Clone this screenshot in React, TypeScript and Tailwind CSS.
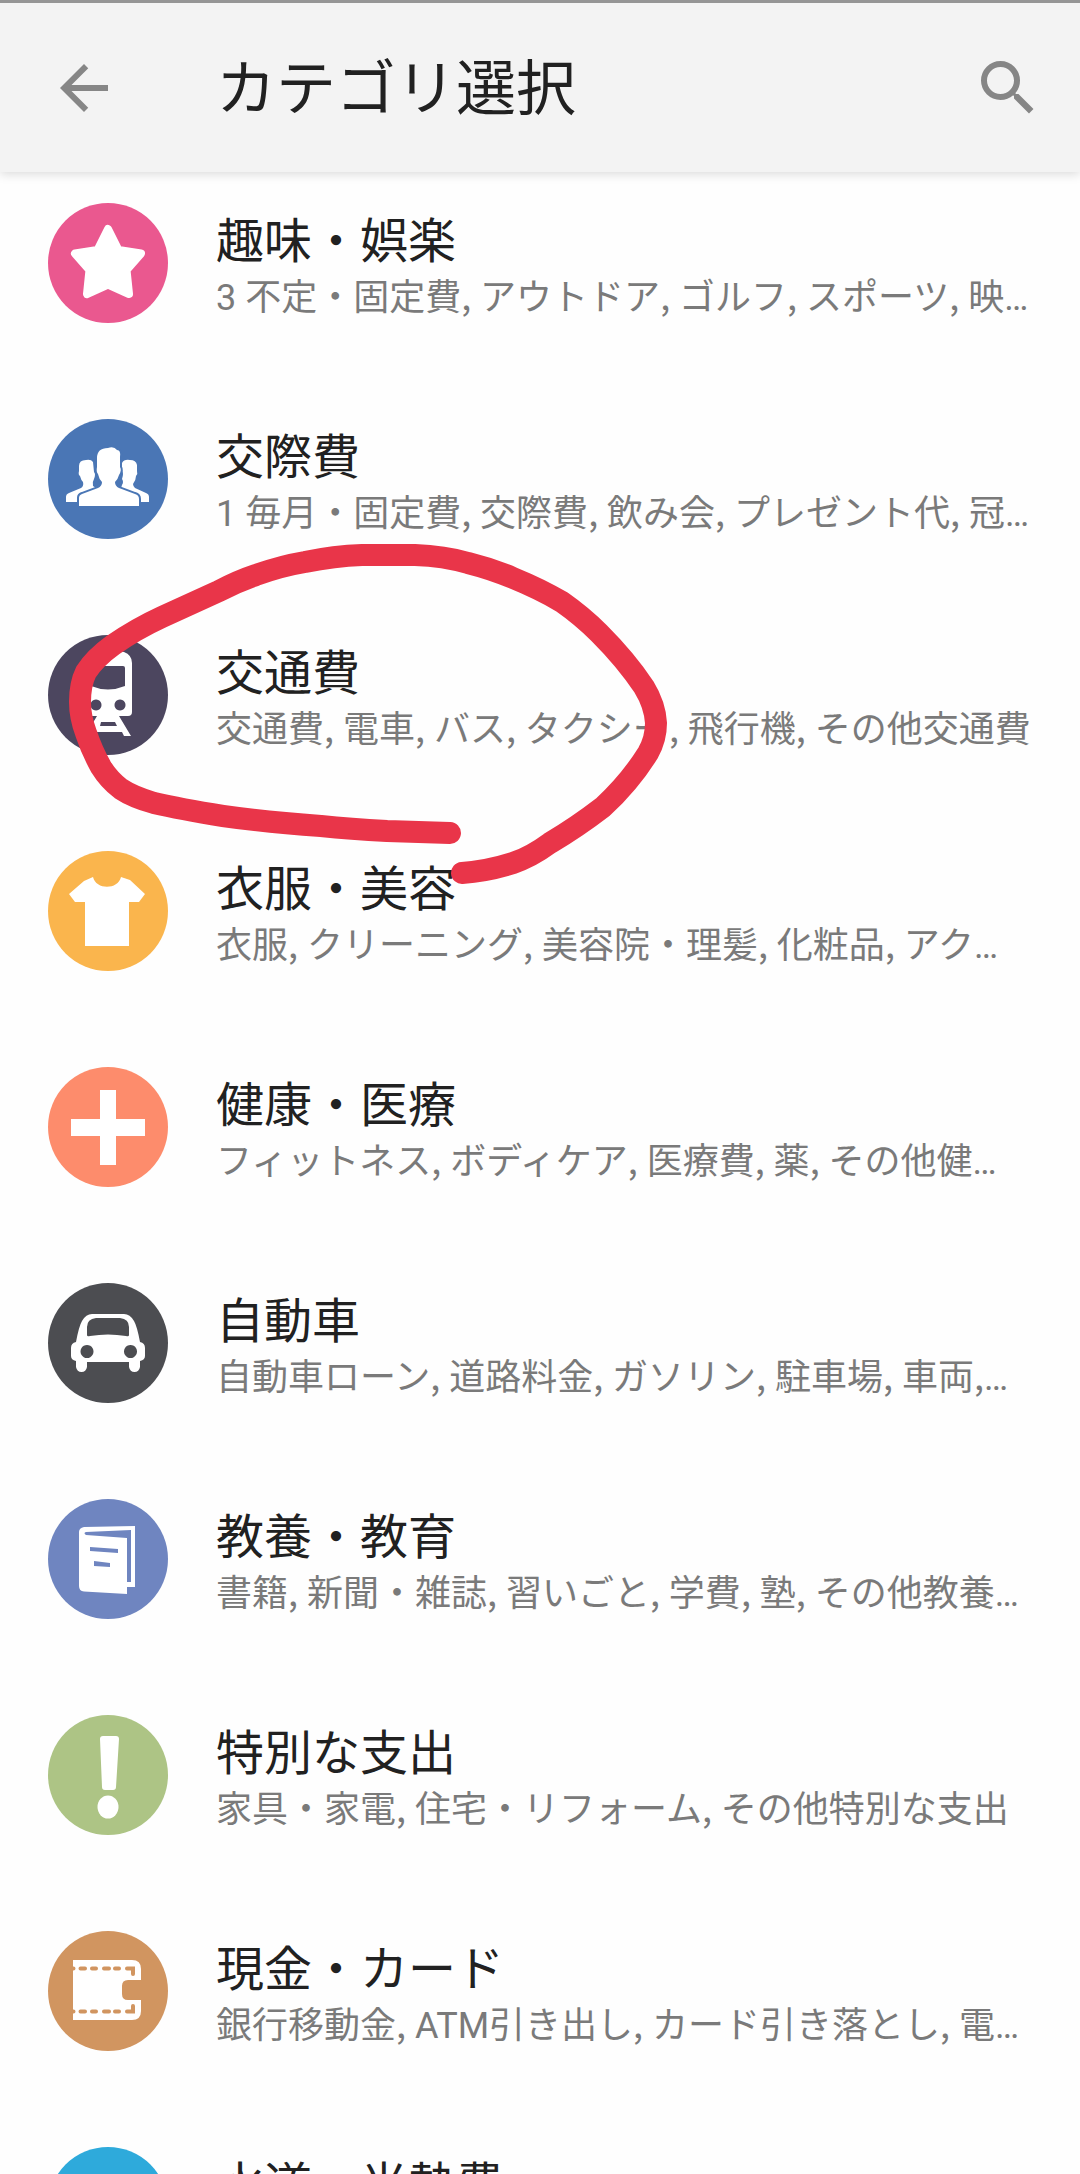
import type { ReactNode } from 'react';
import { MdArrowBack, MdSearch } from 'react-icons/md';

type Category = {
  name: string;
  detail?: string;
  color: string;
  icon?: ReactNode;
};

const categories: Category[] = [
  {
    name: '趣味・娯楽',
    detail: '3 不定・固定費, アウトドア, ゴルフ, スポーツ, 映…',
    color: 'bg-[#ea588f]',
    icon: (
      <path
        d="M60 26L70.500 47L93 50.500L78.500 67L81 91L60 81.500L39 91L41.500 67L27 50.500L49.500 47Z"
        stroke="white"
        strokeWidth={8}
        strokeLinejoin="round"
      />
    ),
  },
  {
    name: '交際費',
    detail: '1 毎月・固定費, 交際費, 飲み会, プレゼント代, 冠…',
    color: 'bg-[#4a76b5]',
    icon: (
      <>
        <path d="M18 83V78Q18 75 21 74L33 69Q36 67 35 63Q33 61 32 57Q30 56 31 52V47Q31 41 38 41Q43 40 45 43L46 53Q48 55 46 60Q44 63 45 67L48 69L32 75Q29 77 29 83Z" />
        <path d="M101 83V78Q101 75 98 74L87 69Q85 67 85 65Q88 61 88 57Q90 55 89 52V46Q88 41 82 41Q76 40 74 44V52Q76 54 74 60Q76 63 74 66L73 69L89 75Q92 77 92 83Z" />
        <path
          d="M31 87V79Q31 76 34 75L50 69Q54 67 54 63Q51 60 50 55Q48 53 49 48V39Q49 29 60 29Q66 27 69 31Q73 31 72 38V48Q74 51 71 56Q70 60 67 63Q67 67 71 69L87 75Q91 76 91 80V87Z"
          stroke="#4a76b5"
          strokeWidth={4}
          paintOrder="stroke"
        />
      </>
    ),
  },
  {
    name: '交通費',
    detail: '交通費, 電車, バス, タクシー, 飛行機, その他交通費',
    color: 'bg-[#4c465f]',
    icon: (
      <path
        fillRule="evenodd"
        d="M44 17Q60 13 76 17Q84 20 84 28V77Q84 81 80 81H71L83 101H76L74 97H46L44 101H37L49 81H40Q36 81 36 77V28Q36 20 44 17ZM45 31Q43 31 43 33V51Q60 58 77 51V33Q77 31 75 31ZM48 64.500a5.500 5.500 0 1 0 .01 0ZM72 64.500a5.500 5.500 0 1 0 .01 0ZM53 87L52 91H69L67 87Z"
      />
    ),
  },
  {
    name: '衣服・美容',
    detail: '衣服, クリーニング, 美容院・理髪, 化粧品, アク…',
    color: 'bg-[#fab54d]',
    icon: <path d="M45 26C48 39 70 39 73 26L82 29L97 43L91 51H81V95H37V51H27L21 43L36 30Z" />,
  },
  {
    name: '健康・医療',
    detail: 'フィットネス, ボディケア, 医療費, 薬, その他健…',
    color: 'bg-[#fd8c6c]',
    icon: <path d="M52 23H68V52H97V69H68V98H52V69H23V52H52Z" />,
  },
  {
    name: '自動車',
    detail: '自動車ローン, 道路料金, ガソリン, 駐車場, 車両,…',
    color: 'bg-[#4c4d51]',
    icon: (
      <path
        fillRule="evenodd"
        d="M44 31H76Q82 31 86 38Q89 43 92 59Q97 60 97 65V73Q97 77 92 78V84Q91 89 86.500 89Q82 89 81 84V79H39V84Q38 89 33.500 89Q29 89 28 84V78Q23 77 23 73V65Q23 60 28 59Q31 43 34 38Q38 31 44 31ZM48 35Q39 36 39 44V52Q39 54 42 53Q60 50 78 53Q81 54 81 52V44Q81 36 72 35ZM39 62a6.500 6.500 0 1 0 .01 0ZM82.500 62a6.500 6.500 0 1 0 .01 0Z"
      />
    ),
  },
  {
    name: '教養・教育',
    detail: '書籍, 新聞・雑誌, 習いごと, 学費, 塾, その他教養…',
    color: 'bg-[#6f85c0]',
    icon: (
      <path
        fillRule="evenodd"
        d="M36 28L87 27V88H79V95L36 92.500Q31 92 31 87V33Q31 29 36 28ZM38 33Q35 34 38 36L79 39V83H83V31ZM42 48V52L70 54V50ZM46 62V67L62 68V64Z"
      />
    ),
  },
  {
    name: '特別な支出',
    detail: '家具・家電, 住宅・リフォーム, その他特別な支出',
    color: 'bg-[#adc485]',
    icon: (
      <>
        <path d="M55 21H68Q71 21 71 24L68 72Q68 75 65 75H57Q54 75 54 72L52 24Q52 21 55 21Z" />
        <ellipse cx={60} cy={92} rx={10.5} ry={11.5} />
      </>
    ),
  },
  {
    name: '現金・カード',
    detail: '銀行移動金, ATM引き出し, カード引き落とし, 電…',
    color: 'bg-[#d19560]',
    icon: (
      <>
        <path d="M25 29H84Q93 29 93 38V49H80Q74 49 74 55V63Q74 69 80 69H93V80Q93 89 84 89H25Z" />
        <path
          d="M25 37.500H25.500M32.500 37.500H37M44 37.500H48M56 37.500H61M67 37.500H71M79 37.500H85V43M25 80.500H25.500M32.500 80.500H37M44 80.500H48M56 80.500H61M67 80.500H71M79 80.500H85V75"
          fill="none"
          stroke="#d19560"
          strokeWidth={4}
          strokeLinecap="round"
        />
      </>
    ),
  },
  {
    name: '水道・光熱費',
    color: 'bg-[#2eaadb]',
  },
];

// Commas use the Japanese face, everything else latin stays in Roboto
function Detail({ text }: { text: string }) {
  return (
    <span className="text-4xl leading-[56px] whitespace-nowrap text-[#7a7a7a]">
      {text.split(/(,)/).map((part, i) =>
        part === ',' ? (
          <span key={i} className="font-['Noto_Sans_CJK_JP',sans-serif] leading-none">
            ,
          </span>
        ) : (
          part
        ),
      )}
    </span>
  );
}

function CategoryRow({ name, detail, color, icon }: Category) {
  return (
    <li>
      <button type="button" className="flex h-[216px] w-full items-start gap-12 px-12 text-left">
        <span className={`size-[120px] shrink-0 rounded-full ${color}`}>
          <svg viewBox="0 0 120 120" className="size-full" fill="white" aria-hidden="true">
            {icon}
          </svg>
        </span>
        <span className="flex min-w-0 flex-1 flex-col pt-[11px]">
          <span className="text-5xl leading-[56px] text-[#212121]">{name}</span>
          {detail && <Detail text={detail} />}
        </span>
      </button>
    </li>
  );
}

// Freehand ring around the 交通費 row
function Marker() {
  return (
    <svg
      className="pointer-events-none absolute top-[540px] left-[60px]"
      width={620}
      height={350}
      viewBox="60 540 620 350"
      fill="none"
      stroke="#e93549"
      strokeWidth={22}
      strokeLinecap="round"
      strokeLinejoin="round"
      aria-hidden="true"
    >
      <path d="M450 833L387 831Q350 829 321 826Q265 822 223 816Q180 809 154 803Q133 797 121 789Q109 780 101 767Q92 751 86 733Q80 717 80 702Q80 684 86 672Q95 658 113 645Q136 629 162 617L219 591Q238 581 256 575Q281 566 305 562Q334 556 362 555H415Q444 556 468 563Q492 569 513 578Q540 589 562 602Q582 616 599 633Q626 660 644 687Q655 705 656 723Q656 739 648 753Q630 782 603 807Q577 827 550 843Q531 857 513 863Q488 871 462 873" />
    </svg>
  );
}

export default function App() {
  return (
    <div className="relative flex h-screen flex-col overflow-hidden bg-[#fefefe] font-[Roboto,'Noto_Sans_CJK_JP',sans-serif]">
      <header className="z-10 flex h-[172px] shrink-0 items-center border-t-3 border-[#959595] bg-[#f3f3f3] pr-9 pl-12 shadow-[0_2px_10px_rgba(0,0,0,0.15)]">
        <button type="button" aria-label="戻る" className="text-[#868686]">
          <MdArrowBack className="size-[72px]" />
        </button>
        <h1 className="ml-24 flex-1 pt-1 text-6xl text-[#212121]">カテゴリ選択</h1>
        <button type="button" aria-label="検索" className="text-[#868686]">
          <MdSearch className="size-[72px]" />
        </button>
      </header>
      <main className="min-h-0 flex-1 overflow-y-auto pt-[31px] [scrollbar-width:none]">
        <ul>
          {categories.map((category) => (
            <CategoryRow key={category.name} {...category} />
          ))}
        </ul>
      </main>
      <Marker />
    </div>
  );
}
